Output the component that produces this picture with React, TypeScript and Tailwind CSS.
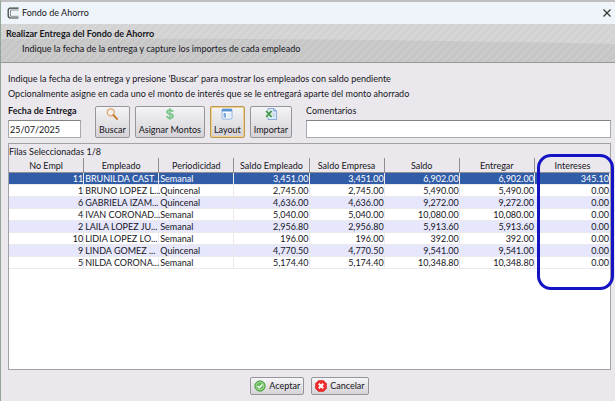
import { useState } from 'react';
import type { ReactNode } from 'react';

type Row = {
    id: number;
    name: string;
    period: string;
    employee: string;
    company: string;
    balance: string;
    deliver: string;
    interest: string;
};

const columns = ['No Empl', 'Empleado', 'Periodicidad', 'Saldo Empleado', 'Saldo Empresa', 'Saldo', 'Entregar', 'Intereses'];

const rows: Row[] = [
    { id: 11, name: 'BRUNILDA CAST...', period: 'Semanal', employee: '3,451.00', company: '3,451.00', balance: '6,902.00', deliver: '6,902.00', interest: '345.10' },
    { id: 1, name: 'BRUNO LOPEZ L...', period: 'Quincenal', employee: '2,745.00', company: '2,745.00', balance: '5,490.00', deliver: '5,490.00', interest: '0.00' },
    { id: 6, name: 'GABRIELA IZAM...', period: 'Quincenal', employee: '4,636.00', company: '4,636.00', balance: '9,272.00', deliver: '9,272.00', interest: '0.00' },
    { id: 4, name: 'IVAN CORONAD...', period: 'Semanal', employee: '5,040.00', company: '5,040.00', balance: '10,080.00', deliver: '10,080.00', interest: '0.00' },
    { id: 2, name: 'LAILA LOPEZ JU...', period: 'Semanal', employee: '2,956.80', company: '2,956.80', balance: '5,913.60', deliver: '5,913.60', interest: '0.00' },
    { id: 10, name: 'LIDIA LOPEZ LO...', period: 'Semanal', employee: '196.00', company: '196.00', balance: '392.00', deliver: '392.00', interest: '0.00' },
    { id: 9, name: 'LINDA GOMEZ ...', period: 'Quincenal', employee: '4,770.50', company: '4,770.50', balance: '9,541.00', deliver: '9,541.00', interest: '0.00' },
    { id: 5, name: 'NILDA CORONA...', period: 'Semanal', employee: '5,174.40', company: '5,174.40', balance: '10,348.80', deliver: '10,348.80', interest: '0.00' },
];

function LogoIcon() {
    return (
        <svg className="h-3 w-3" viewBox="0 0 12 12" fill="none">
            <path d="M11.5 1.2H2.5L1.2 2.5v7L2.5 11h9" stroke="#3a3a3a" strokeWidth="1.2" />
            <path d="M11.5 3H3.5v6.3h8" stroke="#8a8f94" strokeWidth="1" />
        </svg>
    );
}

function SearchIcon() {
    return (
        <svg className="h-3 w-3" viewBox="0 0 12 12" fill="none">
            <circle cx="4.8" cy="4.3" r="3.5" fill="#f3efed" stroke="#dfa66c" strokeWidth="1.3" />
            <path d="M7.4 7l3.6 3.9" stroke="#c67f35" strokeWidth="2.1" strokeLinecap="round" />
        </svg>
    );
}

function DollarIcon() {
    return (
        <svg className="h-3 w-3" viewBox="0 0 12 12" fill="none">
            <path d="M9 3.8C8.6 2.7 7.4 2.2 6 2.2c-1.6 0-2.9.6-2.9 1.9C3.1 6.8 9 5.2 9 8c0 1.3-1.3 2-3 2-1.6 0-2.8-.7-3.1-1.9" stroke="#7cc68b" strokeWidth="1.9" />
            <path d="M6 0v12" stroke="#7cc68b" strokeWidth="1.3" />
        </svg>
    );
}

function LayoutIcon() {
    return (
        <svg className="h-3 w-3" viewBox="0 0 12 12">
            <rect x="1" y="1" width="10" height="10" rx="1" fill="#fff" stroke="#8fb4e2" />
            <path d="M1 1h10v2.5H1z" fill="#5b92d6" />
            <path d="M2.5 5H5v4.5H2.5z" fill="#7ba7df" />
            <path d="M6 5h4v4.5H6z" fill="#e4edf8" />
        </svg>
    );
}

function SheetIcon() {
    return (
        <svg className="h-3 w-3" viewBox="0 0 12 12" fill="none">
            <path d="M3 .5h6l2.5 2.5v8.5H3z" fill="#dfeafa" stroke="#7fa6d8" strokeWidth=".9" />
            <path d="M8.8.5V3h2.7" stroke="#6d9ad0" strokeWidth=".9" />
            <path d="M7.5 6H10M7.5 8H10" stroke="#9dbbdd" strokeWidth=".8" />
            <path d="M.5 2.5h7v7h-7z" fill="#d9edd8" />
            <path d="M1.2 3l5.4 6M6.6 3l-5.4 6" stroke="#3f9250" strokeWidth="1.7" />
        </svg>
    );
}

function AcceptIcon() {
    return (
        <svg className="h-3 w-3" viewBox="0 0 12 12" fill="none">
            <circle cx="6" cy="6" r="5.2" fill="#65b957" stroke="#469a3d" strokeWidth=".8" />
            <circle cx="6" cy="6" r="3.9" stroke="#b5dfad" strokeWidth=".8" />
            <path d="M3.7 6l1.7 1.7 3-3.2" stroke="#fff" strokeWidth="1.5" />
        </svg>
    );
}

function CancelIcon() {
    return (
        <svg className="h-3 w-3" viewBox="0 0 12 12" fill="none">
            <path d="M3.5.5h5l3 3v5l-3 3h-5l-3-3v-5z" fill="#ee2e2e" stroke="#d91e1e" strokeWidth=".6" />
            <path d="M3.8 3.8l4.4 4.4M8.2 3.8L3.8 8.2" stroke="#fff" strokeWidth="2" />
        </svg>
    );
}

function ToolButton({ icon, label, active }: { icon: ReactNode; label: string; active?: boolean }) {
    return (
        <button
            type="button"
            className={`flex h-8 flex-col items-center justify-between rounded-xs border bg-linear-to-b from-[#f4f3f5] to-[#d5d3d7] px-[3px] pt-px leading-3 ${active ? 'border-[#b89a59] ring-1 ring-[#f0cf87] ring-inset' : 'border-[#97959a]'}`}
        >
            {icon}
            <span className="pb-px">{label}</span>
        </button>
    );
}

function FooterButton({ icon, label }: { icon: ReactNode; label: string }) {
    return (
        <button
            type="button"
            className="flex h-[18px] items-center gap-[3px] rounded-xs border border-[#97959a] bg-linear-to-b from-[#f6f5f7] to-[#d5d3d7] px-[3px]"
        >
            {icon}
            {label}
        </button>
    );
}

export default function App() {
    const [date, setDate] = useState('25/07/2025');
    const [comments, setComments] = useState('');
    const [selected, setSelected] = useState(11);

    return (
        <div className="flex min-h-screen flex-col border-t-2 border-l border-t-[#bfbfc1] border-l-[#8fa698] bg-[#ebe8ed] font-['Lato',sans-serif] text-[9px] leading-3 text-[#16161c]">
            {/* Title bar */}
            <header className="flex h-[22px] items-center gap-[3px] rounded-tl bg-[#eef4f9] pr-1 pl-1.5">
                <LogoIcon />
                <h1>Fondo de Ahorro</h1>
                <button type="button" aria-label="Cerrar" className="ml-auto">
                    <svg className="h-2 w-2" viewBox="0 0 8 8" stroke="#333" strokeWidth="1.2">
                        <path d="M.5.5l7 7M7.5.5l-7 7" />
                    </svg>
                </button>
            </header>

            {/* Banner */}
            <section className="relative h-[39px] border-b border-[#989898] bg-[#d3d3d3]">
                <svg className="absolute inset-0 h-full w-full" viewBox="0 0 614 38" preserveAspectRatio="none">
                    <defs>
                        <pattern id="stripes" width="8" height="8" patternUnits="userSpaceOnUse">
                            <path d="M-1 9L9-1" stroke="#fff" strokeOpacity=".22" />
                        </pattern>
                    </defs>
                    <path d="M0 15Q300 13 614 20V38H0z" fill="#c7c7c7" />
                    <path d="M0 0h614v38H0z" fill="url(#stripes)" />
                </svg>
                <div className="relative px-[5px] pt-1">
                    <h2 className="font-bold">Realizar Entrega del Fondo de Ahorro</h2>
                    <p className="pt-[3px] pl-4">Indique la fecha de la entrega y capture los importes de cada empleado</p>
                </div>
            </section>

            <main className="flex flex-1 flex-col pt-2 pr-1 pl-[7px]">
                <p className="leading-[15px]">
                    Indique la fecha de la entrega y presione &apos;Buscar&apos; para mostrar los empleados con saldo pendiente
                </p>
                <p className="leading-[15px]">
                    Opcionalmente asigne en cada uno el monto de interés que se le entregará aparte del monto ahorrado
                </p>

                {/* Filters */}
                <form className="flex items-end gap-[14px] pt-1" onSubmit={(e) => e.preventDefault()}>
                    <div className="flex w-[73px] flex-col gap-[3px]">
                        <label htmlFor="date" className="font-bold whitespace-nowrap">Fecha de Entrega</label>
                        <input
                            id="date"
                            value={date}
                            onChange={(e) => setDate(e.target.value)}
                            className="h-[18px] w-full border border-[#a9a8ac] border-t-[#828187] bg-white px-px"
                        />
                    </div>
                    <div className="flex gap-[5px]">
                        <ToolButton icon={<SearchIcon />} label="Buscar" />
                        <ToolButton icon={<DollarIcon />} label="Asignar Montos" />
                        <ToolButton icon={<LayoutIcon />} label="Layout" active />
                        <ToolButton icon={<SheetIcon />} label="Importar" />
                    </div>
                    <div className="flex flex-1 flex-col gap-[3px]">
                        <label htmlFor="comments">Comentarios</label>
                        <input
                            id="comments"
                            value={comments}
                            onChange={(e) => setComments(e.target.value)}
                            className="h-[18px] w-full border border-[#a9a8ac] border-t-[#828187] bg-white px-1"
                        />
                    </div>
                </form>

                {/* Employees */}
                <section className="relative mt-[5px] flex flex-1 flex-col border border-[#a2a1a5]">
                    <p className="h-[14px] leading-[15px]">Filas Seleccionadas 1/8</p>
                    <div className="flex-1 bg-white">
                        <table className="w-full table-fixed border-separate border-spacing-0">
                            <thead>
                                <tr className="h-[15px] bg-[#ebe8ed]">
                                    {columns.map((column) => (
                                        <th key={column} className="border-r border-b border-[#8f8e93] p-0 pt-0.5 leading-3 font-normal whitespace-nowrap last:border-r-0">
                                            {column}
                                        </th>
                                    ))}
                                </tr>
                            </thead>
                            <tbody>
                                {rows.map((row) => (
                                    <tr
                                        key={row.id}
                                        onClick={() => setSelected(row.id)}
                                        className={`h-3 text-right leading-[11px] whitespace-nowrap *:border-r *:border-b *:border-[#e9e9ee] *:p-0 ${row.id === selected ? 'bg-[#315ca8] text-white' : 'even:bg-white odd:bg-[#e6e6fd]'}`}
                                    >
                                        <td>{row.id}</td>
                                        <td className="text-left"><span className="pl-px">{row.name}</span></td>
                                        <td className="text-left"><span className="pl-px">{row.period}</span></td>
                                        <td>{row.employee}</td>
                                        <td>{row.company}</td>
                                        <td>{row.balance}</td>
                                        <td>{row.deliver}</td>
                                        <td>{row.interest}</td>
                                    </tr>
                                ))}
                            </tbody>
                        </table>
                    </div>
                    {/* Interest column highlight */}
                    <div className="pointer-events-none absolute top-[10px] -right-1 h-[136px] w-[77px] rounded-[14px] border-[3px] border-[#1414c4]" />
                </section>

                <footer className="flex h-[31px] items-center justify-center gap-[7px]">
                    <FooterButton icon={<AcceptIcon />} label="Aceptar" />
                    <FooterButton icon={<CancelIcon />} label="Cancelar" />
                </footer>
            </main>
        </div>
    );
}
